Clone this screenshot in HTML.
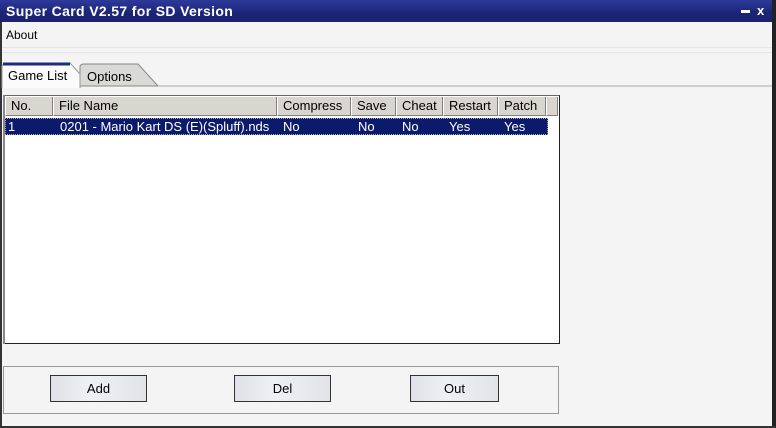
<!DOCTYPE html><html><head><style>
*{margin:0;padding:0;box-sizing:border-box}
body{width:776px;height:428px;overflow:hidden;background:#f4f4f4;font-family:"Liberation Sans",sans-serif;font-size:13px;position:relative;color:#000}
.a{position:absolute}
.title{left:0;top:0;width:776px;height:22px;background:linear-gradient(#2d3a9a,#1b2475 60%,#1a2270);color:#fff;font-weight:bold;font-size:14px;letter-spacing:0.35px;line-height:22px;padding-left:6px}
.hdr{top:97px;height:19px;background:#d8d6ce;border-right:1px solid #808080;border-bottom:1px solid #808080;border-left:1px solid #fff;line-height:18px;padding-left:5px;font-size:13px}
.btn{top:375px;height:27px;border:1px solid #333;background:linear-gradient(90deg,#dfe1e6,#eef0f3 40%,#e2e4e8);text-align:center;line-height:25px}
</style></head><body>
<div class="a title">Super Card V2.57 for SD Version</div>
<div class="a" style="left:741px;top:10px;width:9px;height:3px;background:#fff"></div>
<div class="a" style="left:757px;top:3px;color:#fff;font-weight:bold;font-size:13px">x</div>
<div class="a" style="left:772px;top:0;width:4px;height:428px;background:#222"></div>
<div class="a" style="left:0;top:22px;width:2px;height:406px;background:#333"></div>
<div class="a" style="left:0;top:426px;width:776px;height:2px;background:#333"></div>
<div class="a" style="left:6px;top:28px;font-size:12px">About</div>
<div class="a" style="left:2px;top:47px;width:770px;height:1px;background:#e4e4e4"></div>
<div class="a" style="left:2px;top:52px;width:770px;height:1px;background:#e4e4e4"></div>
<svg class="a" style="left:0;top:62px" width="776" height="28">
<path d="M80 24 L80 4 Q81 2 84 2 L138 2 L158 24 Z" fill="#d9d9d6" stroke="#888"/>
<path d="M2 26 L2 4 Q3 1 8 1 L70 1 L80 12 L80 26" fill="#fbfbfb" stroke="#999"/>
<path d="M3 2 L70 2" stroke="#1e2a7e" stroke-width="3"/>
<path d="M158 24 L772 24" stroke="#aaa"/>
</svg>
<div class="a" style="left:8px;top:68px">Game List</div>
<div class="a" style="left:87px;top:69px">Options</div>
<div class="a" style="left:3px;top:95px;width:557px;height:249px;border:1px solid #222;border-top-color:#666;background:#fff"></div>
<div class="a" style="left:3px;top:95px;width:2px;height:249px;background:#888"></div>
<div class="a hdr" style="left:5px;width:48px">No.</div>
<div class="a hdr" style="left:53px;width:224px">File Name</div>
<div class="a hdr" style="left:277px;width:74px">Compress</div>
<div class="a hdr" style="left:351px;width:45px">Save</div>
<div class="a hdr" style="left:396px;width:47px">Cheat</div>
<div class="a hdr" style="left:443px;width:55px">Restart</div>
<div class="a hdr" style="left:498px;width:48px">Patch</div>
<div class="a hdr" style="left:546px;width:12px"></div>
<div class="a" style="left:5px;top:118px;width:543px;height:17px;background:#0c1a6b;border:1px dotted #aab;color:#fff;line-height:15px">
<span class="a" style="left:2px">1</span><span class="a" style="left:54px">0201 - Mario Kart DS (E)(Spluff).nds</span><span class="a" style="left:277px">No</span><span class="a" style="left:352px">No</span><span class="a" style="left:396px">No</span><span class="a" style="left:443px">Yes</span><span class="a" style="left:498px">Yes</span></div>
<div class="a" style="left:3px;top:366px;width:556px;height:48px;border:1px solid #999"></div>
<div class="a btn" style="left:50px;width:97px">Add</div>
<div class="a btn" style="left:234px;width:97px">Del</div>
<div class="a btn" style="left:410px;width:89px">Out</div>
</body></html>
